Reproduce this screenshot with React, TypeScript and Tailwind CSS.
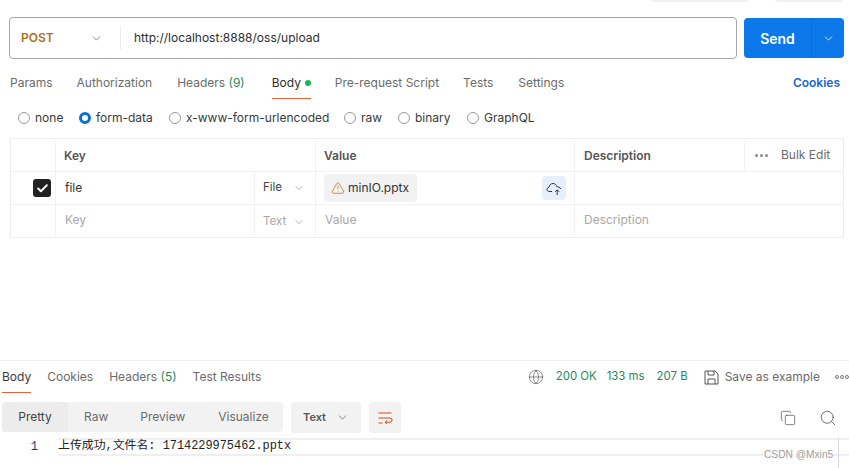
import React from "react";
import { ChevronDown, Check, TriangleAlert, Globe, Copy, Search } from "lucide-react";

const Radio = ({ label, on, w }: { label: string; on?: boolean; w: string }) => (
  <div className={`flex items-center gap-[5px] ${w}`}>
    {on ? (
      <span className="w-3 h-3 rounded-full border-[3.5px] border-[#0a6fd8] bg-white" />
    ) : (
      <span className="w-3 h-3 rounded-full border border-[#9a9a9a] bg-white" />
    )}
    <span className="text-[#3a3a3a]">{label}</span>
  </div>
);

const Dots = () => (
  <span className="flex gap-[2px]">
    <span className="w-[3px] h-[3px] rounded-full bg-[#8a8a8a]" />
    <span className="w-[3px] h-[3px] rounded-full bg-[#8a8a8a]" />
    <span className="w-[3px] h-[3px] rounded-full bg-[#8a8a8a]" />
  </span>
);

export default function App() {
  return (
    <div
      className="relative w-[849px] h-[468px] overflow-hidden bg-white text-[12px] text-[#6b6b6b] flex flex-col"
      style={{ fontFamily: 'Inter, "Noto Sans CJK SC", sans-serif' }}
    >
      {/* top strip */}
      <div className="h-[2px] flex justify-end pr-[6px] gap-[27px]">
        <div className="w-[97px] bg-[#f0f0f0] rounded-b" />
        <div className="w-[68px] bg-[#f0f0f0] rounded-b" />
      </div>

      {/* URL bar */}
      <div className="mt-[15px] ml-[9px] mr-[5px] flex gap-[7px] h-[42px]">
        <div className="w-[728px] border border-[#a6a6a6] rounded-[4px] flex items-center">
          <div className="w-[110px] pl-[11px] pr-[17px] flex items-center justify-between">
            <span className="font-semibold text-[#a9731c]">POST</span>
            <ChevronDown size={13} strokeWidth={1.25} className="text-[#555]" />
          </div>
          <div className="w-px h-6 bg-[#ececec]" />
          <span className="ml-[13px] text-[#2e2e2e]">http://localhost:8888/oss/upload</span>
        </div>
        <div className="flex flex-1 my-px rounded-[4px] bg-[#0b79ea] text-white">
          <div className="w-[68px] flex items-center justify-center font-semibold text-[14px] border-r border-[#0a6dd2]">
            Send
          </div>
          <div className="flex-1 flex items-center justify-center">
            <ChevronDown size={13} strokeWidth={1.5} />
          </div>
        </div>
      </div>

      {/* request tabs */}
      <div className="mt-[15px] ml-[10px] mr-[9px] h-[24px] flex items-start justify-between leading-[18px]">
        <div className="flex">
          <span>Params</span>
          <span className="ml-[24px]">Authorization</span>
          <span className="ml-[25px]">
            Headers <span className="text-[#1f8a5b]">(9)</span>
          </span>
          <span className="ml-[27px] w-[39px] flex items-center gap-[4px] text-[#2e2e2e] pb-[6px] border-b border-[#e8603c] -mb-px">
            Body
            <span className="w-[6px] h-[6px] rounded-full bg-[#12b85c]" />
          </span>
          <span className="ml-[24px]">Pre-request Script</span>
          <span className="ml-[24px]">Tests</span>
          <span className="ml-[25px]">Settings</span>
        </div>
        <span className="font-semibold text-[#1d66d0]">Cookies</span>
      </div>

      {/* body type */}
      <div className="mt-[11px] ml-[18px] h-[18px] flex items-center">
        <Radio label="none" w="w-[61px]" />
        <Radio label="form-data" on w="w-[90px]" />
        <Radio label="x-www-form-urlencoded" w="w-[175px]" />
        <Radio label="raw" w="w-[54px]" />
        <Radio label="binary" w="w-[69px]" />
        <Radio label="GraphQL" w="w-[80px]" />
      </div>

      {/* table */}
      <div className="mt-[11px] ml-[10px] mr-[5px] border border-[#ededed] flex flex-col">
        <div className="h-[33px] pt-[2px] flex border-b border-[#f2f2f2] items-center font-semibold text-[#555]">
          <div className="w-[45px] h-full border-r border-[#f2f2f2]" />
          <div className="w-[260px] h-full pl-2 flex items-center border-r border-[#f2f2f2]">Key</div>
          <div className="w-[259px] h-full pl-2 flex items-center border-r border-[#f2f2f2]">Value</div>
          <div className="w-[170px] h-full pl-[9px] flex items-center border-r border-[#f2f2f2]">Description</div>
          <div className="flex-1 h-full flex items-center pl-[10px] gap-[13px] font-normal text-[#6b6b6b] pb-[2px]">
            <Dots />
            <span>Bulk Edit</span>
          </div>
        </div>
        <div className="h-[33px] flex border-b border-[#f2f2f2] items-center">
          <div className="w-[45px] h-full border-r border-[#f2f2f2] flex items-center justify-end pr-[4px]">
            <span className="w-[18px] h-[18px] rounded-[3px] bg-[#222] flex items-center justify-center">
              <Check size={13} strokeWidth={3.5} className="text-white" />
            </span>
          </div>
          <div className="w-[199px] h-full pl-[9px] flex items-center border-r border-[#f2f2f2] text-[#333]">file</div>
          <div className="w-[61px] h-full pl-[8px] pr-[10px] flex items-center justify-between border-r border-[#f2f2f2] text-[11.5px] text-[#444]">
            File
            <ChevronDown size={12} strokeWidth={1} className="text-[#666]" />
          </div>
          <div className="w-[259px] h-full pl-2 pr-[8px] flex items-center justify-between border-r border-[#f2f2f2]">
            <div className="h-[28px] w-[93px] rounded-[4px] bg-[#f2f2f2] flex items-center pl-[7px] gap-[3px] text-[#333]">
              <TriangleAlert size={14} strokeWidth={1.25} className="text-[#a9731c]" />
              minIO.pptx
            </div>
            <div className="w-6 h-6 rounded-[4px] bg-[#e6effd] flex items-center justify-center">
              <svg width="16" height="16" viewBox="0 0 16 16" fill="none" stroke="#333" strokeWidth="1">
                <path d="M6 11.5H3.2C1.8 11.5 1 10.6 1 9.4 1 8.2 1.9 7.4 3 7.4 3.2 5.4 4.7 3.5 7 3.5 9 3.5 10.4 5 10.8 6.7 12 6.7 14 7.2 14.8 9" />
                <path d="M11.2 15V10M9.2 11.8l2-2 2 2" />
              </svg>
            </div>
          </div>
          <div className="flex-1" />
        </div>
        <div className="h-[32px] flex items-center text-[#a8a8a8]">
          <div className="w-[45px] h-full border-r border-[#f2f2f2]" />
          <div className="w-[199px] h-full pl-[9px] pb-[2px] flex items-center border-r border-[#f2f2f2]">Key</div>
          <div className="w-[61px] h-full pl-[8px] pr-[10px] pt-[1px] flex items-center justify-between border-r border-[#f2f2f2] text-[11.5px]">
            Text
            <ChevronDown size={12} strokeWidth={1} className="text-[#666]" />
          </div>
          <div className="w-[259px] h-full pl-[9px] pb-[2px] flex items-center border-r border-[#f2f2f2]">Value</div>
          <div className="flex-1 pl-[9px] pb-[2px]">Description</div>
        </div>
      </div>

      {/* response */}
      <div className="mt-[122px] border-t border-[#efefef] flex flex-col flex-1">
        <div className="h-[32px] flex items-start justify-between pl-[2px]">
          <div className="flex pt-[7px] leading-[18px]">
            <span className="text-[#3a3a3a] pb-[6px] border-b border-[#e8603c]">Body</span>
            <span className="ml-[16px]">Cookies</span>
            <span className="ml-[16px]">
              Headers <span className="text-[#1f8a5b]">(5)</span>
            </span>
            <span className="ml-[16px]">Test Results</span>
          </div>
          <div className="flex items-center h-[32px]">
            <Globe size={16} strokeWidth={1} className="text-[#555] mr-[12px]" />
            <span className="text-[#1f8a5b] text-[11.4px] mr-[10px]">200 OK</span>
            <span className="text-[#1f8a5b] text-[11.4px] mr-[12px]">133 ms</span>
            <span className="text-[#1f8a5b] text-[11.4px] mr-[16px]">207 B</span>
            <svg width="15" height="15" viewBox="0 0 15 15" fill="none" stroke="#555" strokeWidth="1" className="mr-[6px]">
              <path d="M1 1h10l3 3v10H1zM4 1v4h6V1M4 14V9h7v5" />
            </svg>
            <span className="mr-[15px]">Save as example</span>
            <span className="flex gap-[1px]">
              <span className="w-[4px] h-[4px] rounded-full border border-[#777]" />
              <span className="w-[4px] h-[4px] rounded-full border border-[#777]" />
              <span className="w-[4px] h-[4px] rounded-full border border-[#777]" />
            </span>
          </div>
        </div>
        <div className="mt-[9px] h-[30px] flex items-start pl-[2px] pr-[12px]">
          <div className="h-[30px] w-[281px] rounded-[4px] bg-[#f2f2f2] flex items-center">
            <span className="h-full w-[66px] flex items-center justify-center bg-[#ececec] rounded-l-[4px] text-[#444]">Pretty</span>
            <span className="ml-[16px]">Raw</span>
            <span className="ml-[32px]">Preview</span>
            <span className="ml-[33px]">Visualize</span>
          </div>
          <div className="ml-2 h-[31px] w-[70px] rounded-[4px] bg-[#f2f2f2] flex items-center justify-between pl-[12px] pr-[12px] font-semibold text-[11px] text-[#555]">
            Text
            <ChevronDown size={13} strokeWidth={1.25} className="text-[#555]" />
          </div>
          <div className="ml-2 h-[31px] w-8 rounded-[4px] bg-[#f2f2f2] flex items-center justify-center">
            <svg width="16" height="16" viewBox="0 0 16 16" fill="none" stroke="#d9481c" strokeWidth="1">
              <path d="M1.5 3h13M1.5 8h11.5a2 2 0 0 1 0 4.2H8.5M1.5 13H5.5M10 10.5l-2 1.7 2 1.7" />
            </svg>
          </div>
          <div className="ml-auto flex items-center h-[31px] gap-[23px]">
            <Copy size={16} strokeWidth={1} className="text-[#444]" />
            <Search size={18} strokeWidth={1} className="text-[#444]" />
          </div>
        </div>
        <div className="mt-[6px] flex h-[18px]">
          <div className="w-[58px] pr-[20px] text-right text-[12px] leading-[18px] text-[#1e3a7a]" style={{ fontFamily: '"Liberation Mono", monospace' }}>1</div>
          <div
            className="flex-1 h-[18px] border-y-2 border-[#efefef] text-[11.9px] leading-[13px] text-[#222] whitespace-nowrap"
            style={{ fontFamily: '"Liberation Mono", "Noto Sans CJK SC", monospace' }}
          >
            上传成功,文件名: 1714229975462.pptx
          </div>
        </div>
      </div>

      <span className="absolute left-[764px] top-[447px] text-[10.2px] text-[#a0a0a0] bg-white/60" style={{ fontFamily: '"Liberation Sans", sans-serif' }}>
        CSDN @Mxin5
      </span>
      <div className="absolute left-[838px] top-[437px] w-px h-[31px] bg-[#dcdcdc]" />
    </div>
  );
}
